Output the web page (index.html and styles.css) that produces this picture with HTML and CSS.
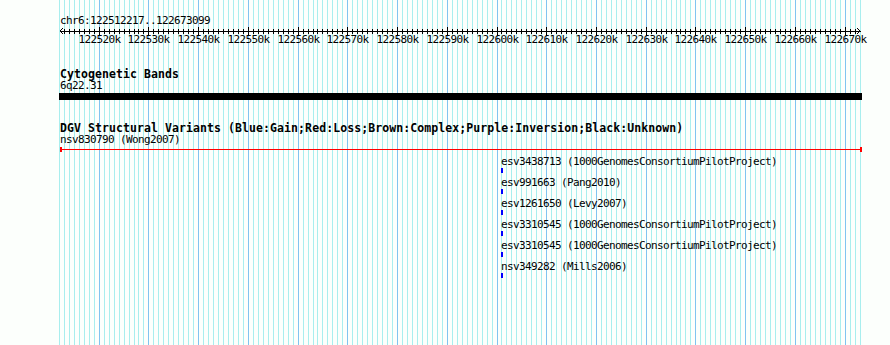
FILE: index.html
```html
<!DOCTYPE html>
<html lang="en">
<head>
    <meta charset="UTF-8">
    <title>chr6:122512217..122673099</title>
    <link rel="stylesheet" href="styles.css">
</head>
<body>
    <div class="panel">
        <!-- grid lines behind the tracks, built by script -->
        <svg class="grid" id="grid" width="890" height="345"></svg>

        <div class="tracks">
            <!-- Ruler -->
            <div class="ruler">
                <div class="label">chr6:122512217..122673099</div>
                <div class="scale" id="scale">
                    <svg id="ticks" width="802" height="9" shape-rendering="crispEdges"></svg>
                </div>
            </div>

            <!-- Cytogenetic bands -->
            <section class="track">
                <h2 class="track-title">Cytogenetic Bands</h2>
                <div class="label">6q22.31</div>
                <div class="band"></div>
            </section>

            <!-- DGV -->
            <section class="track">
                <h2 class="track-title">DGV Structural Variants (Blue:Gain;Red:Loss;Brown:Complex;Purple:Inversion;Black:Unknown)</h2>
                <div class="label">nsv830790 (Wong2007)</div>
                <div class="loss"><span class="cap"></span><span class="cap"></span></div>
                <div class="stack">
                    <div class="feature">
                        <div class="label">esv3438713 (1000GenomesConsortiumPilotProject)</div>
                        <div class="gain"></div>
                    </div>
                    <div class="feature">
                        <div class="label">esv991663 (Pang2010)</div>
                        <div class="gain"></div>
                    </div>
                    <div class="feature">
                        <div class="label">esv1261650 (Levy2007)</div>
                        <div class="gain"></div>
                    </div>
                    <div class="feature">
                        <div class="label">esv3310545 (1000GenomesConsortiumPilotProject)</div>
                        <div class="gain"></div>
                    </div>
                    <div class="feature">
                        <div class="label">esv3310545 (1000GenomesConsortiumPilotProject)</div>
                        <div class="gain"></div>
                    </div>
                    <div class="feature">
                        <div class="label">nsv349282 (Mills2006)</div>
                        <div class="gain"></div>
                    </div>
                </div>
            </section>
        </div>
    </div>

    <script>
        // Region shown and where it sits in the panel
        const START = 122512217;
        const END = 122673099;
        const LEFT = 60;
        const WIDTH = 800;
        const NS = 'http://www.w3.org/2000/svg';

        function xOf(bp) {
            return Math.round(LEFT + (bp - START) * WIDTH / (END - START));
        }

        function rect(svg, x, y, w, h, cls) {
            const r = document.createElementNS(NS, 'rect');
            r.setAttribute('x', x);
            r.setAttribute('y', y);
            r.setAttribute('width', w);
            r.setAttribute('height', h);
            if (cls) r.setAttribute('class', cls);
            svg.appendChild(r);
        }

        const grid = document.getElementById('grid');
        const ticks = document.getElementById('ticks');
        const scale = document.getElementById('scale');

        // ruler line and arrow heads
        rect(ticks, 0, 4, WIDTH + 1, 1);
        ['M3,1 L0,4 L3,7', 'M797,1 L800,4 L797,7'].forEach(d => {
            const p = document.createElementNS(NS, 'path');
            p.setAttribute('d', d);
            p.setAttribute('class', 'arrow');
            ticks.appendChild(p);
        });

        // one grid line and tick every 1 kb, a major one every 10 kb
        for (let bp = Math.floor(START / 1000) * 1000; bp <= END; bp += 1000) {
            const x = xOf(bp);
            const major = bp % 10000 === 0;
            rect(grid, x, 0, 1, 345, major ? 'major' : 'minor');

            if (x <= LEFT || x >= LEFT + WIDTH) continue;
            if (major) {
                rect(ticks, x - LEFT, 0, 1, 9);
                const label = document.createElement('span');
                label.className = 'label tick-label';
                label.textContent = (bp / 1000) + 'k';
                label.style.left = (x - LEFT + 0.5) + 'px';
                scale.appendChild(label);
            } else {
                rect(ticks, x - LEFT, 2, 1, 5);
            }
        }
    </script>
</body>
</html>
```

FILE: styles.css
```css
body {
    margin: 0;
    background-color: #fcfffc;
    font-family: "DejaVu Sans Mono", monospace;
    color: #000;
}
.panel {
    position: relative;
    width: 890px;
    height: 345px;
    overflow: hidden;
}
.grid {
    position: absolute;
    top: 0;
    left: 0;
}
.grid .minor {
    fill: #a8eeee;
}
.grid .major {
    fill: #80c4f0;
}
.tracks {
    position: relative;
    padding: 15px 0 0 60px;
}
.label {
    font-size: 11px;
    line-height: 12px;
    letter-spacing: -0.62px;
    white-space: nowrap;
}
/* Ruler */
.scale {
    position: relative;
    height: 19px;
}
.scale svg {
    display: block;
    fill: #000;
}
.scale .arrow {
    fill: none;
    stroke: #000;
    stroke-width: 1;
}
.tick-label {
    position: absolute;
    top: 7px;
    transform: translateX(-50%);
}
/* Tracks */
.track-title {
    margin: 22px 0 0;
    font-size: 11.5px;
    line-height: 12px;
    font-weight: bold;
    letter-spacing: 0.08px;
    white-space: nowrap;
}
.band {
    margin: 1px 0 0 -1px;
    width: 803px;
    height: 7px;
    background-color: #000;
}
.loss {
    position: relative;
    display: flex;
    justify-content: space-between;
    margin-top: 1px;
    width: 802px;
    height: 5px;
}
.loss::before {
    content: '';
    position: absolute;
    left: 0;
    right: 0;
    top: 2px;
    height: 1px;
    background-color: #f00;
}
.cap {
    width: 2px;
    background-color: #f00;
}
.stack {
    margin-left: 441px;
}
.feature {
    padding-top: 4px;
}
.gain {
    width: 2px;
    height: 5px;
    background-color: #00f;
}
```
